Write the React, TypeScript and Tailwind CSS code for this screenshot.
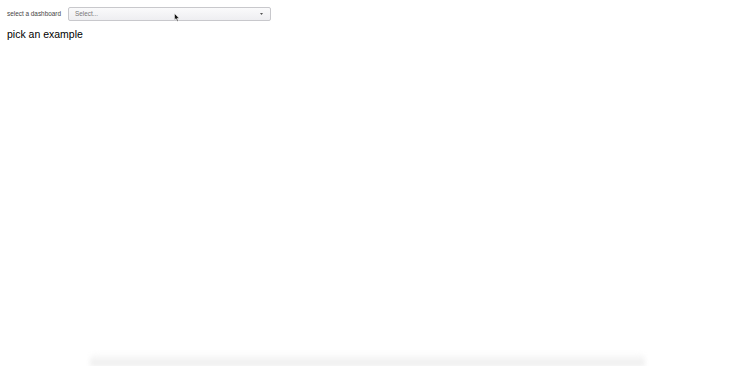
export default function App() {
  return (
    <div
      className="relative flex h-[366px] w-full flex-col overflow-hidden bg-white text-black"
      style={{ fontFamily: '"Liberation Sans", Arial, sans-serif' }}
    >
      <div className="flex items-center gap-[7px] px-[7px] pt-[7px]">
        <span className="text-[6.4px] leading-[14px] text-[#444]">select a dashboard</span>
        <div className="relative flex h-[14px] w-[203px] items-center justify-between rounded-[2px] border border-[#c8c8cc] bg-gradient-to-b from-[#fafafb] to-[#eeeef1] pl-[6px] pr-[7px]">
          <span className="text-[6.4px] text-[#777]">Select...</span>
          <svg width="3" height="2" viewBox="0 0 3 2">
            <path d="M0 0 L3 0 L1.5 2 Z" fill="#555" />
          </svg>
          <svg
            width="6"
            height="9"
            viewBox="0 0 6 9"
            className="absolute left-[105px] top-[5px]"
          >
            <path d="M0.5 0.5 L0.5 7 L2 5.6 L3.2 8.3 L4.2 7.9 L3.1 5.3 L5.2 5.3 Z" fill="#111" stroke="#fff" strokeWidth="0.5" />
          </svg>
        </div>
      </div>
      <p className="px-[7px] pt-[7px] text-[10.5px] leading-[13px]">pick an example</p>
      <div className="mx-auto mt-auto h-[14px] w-[555px] rounded-t-[6px] bg-gradient-to-b from-white to-[#ececec] blur-[2px]" />
    </div>
  );
}
